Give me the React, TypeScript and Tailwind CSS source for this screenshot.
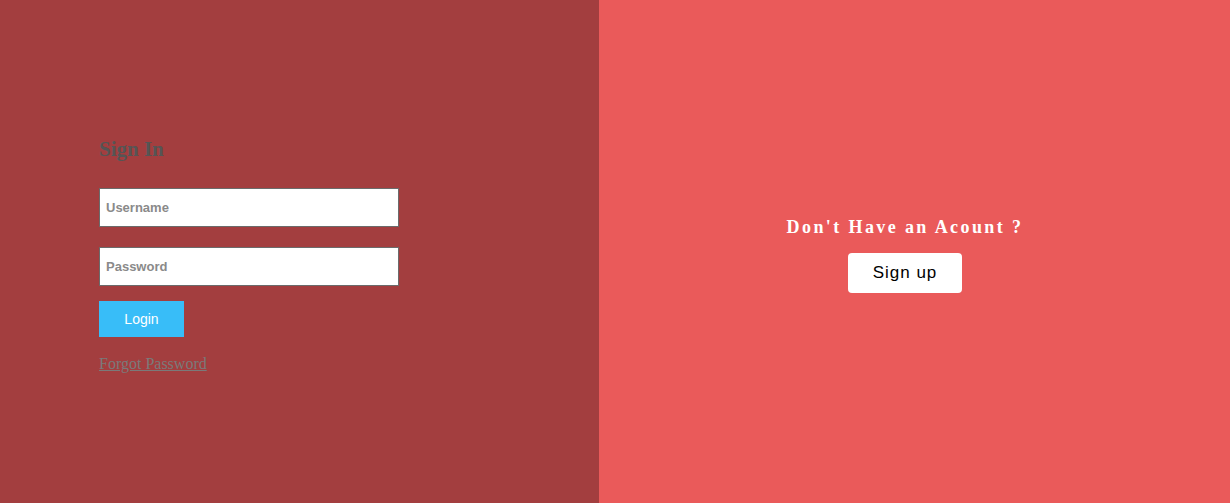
export default function App() {
  return (
    <div className="flex h-[503px] w-[1230px] overflow-hidden">
      <div className="flex w-[599px] flex-col bg-[#a33e3f] pl-[99px] pt-[137px]">
        <h2 className="m-0 text-[21px] leading-[24px] font-bold text-[#555555] [font-family:'Liberation_Serif',serif]">Sign In</h2>
        <input
          placeholder="Username"
          className="mt-[27px] box-border h-[39px] w-[300px] border border-[#6b6b6b] bg-white px-[6px] text-[13px] font-bold text-[#444] outline-none placeholder:text-[#8a8a8a] [font-family:'Liberation_Sans',Arial,sans-serif]"
        />
        <input
          placeholder="Password"
          className="mt-[20px] box-border h-[39px] w-[300px] border border-[#6b6b6b] bg-white px-[6px] text-[13px] font-bold text-[#444] outline-none placeholder:text-[#8a8a8a] [font-family:'Liberation_Sans',Arial,sans-serif]"
        />
        <button className="mt-[15px] h-[36px] w-[85px] bg-[#38bdf8] text-[14px] text-white [font-family:'Liberation_Sans',Arial,sans-serif]">
          Login
        </button>
        <a href="#" className="mt-[17px] w-fit text-[16px] leading-[19px] text-[#7a7a7a] underline [font-family:'Liberation_Serif',serif]">
          Forgot Password
        </a>
      </div>
      <div className="flex flex-1 flex-col items-center justify-center bg-[#ea5a5a] pt-[6px] pr-[19px]">
        <h3 className="m-0 text-[18px] leading-[21px] font-bold tracking-[2.4px] text-white [font-family:'Liberation_Serif',serif]">
          Don't Have an Acount ?
        </h3>
        <button className="mt-[15px] h-[40px] w-[114px] rounded-[4px] bg-white text-[17px] tracking-[1px] text-black [font-family:'Liberation_Sans',Arial,sans-serif]">
          Sign up
        </button>
      </div>
    </div>
  );
}
